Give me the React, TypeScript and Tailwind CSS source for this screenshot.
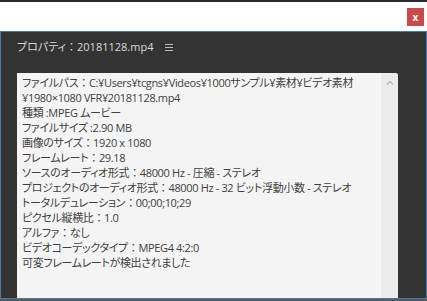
const lines = [
  "ファイルパス：C:¥Users¥tcgns¥Videos¥1000サンプル¥素材¥ビデオ素材",
  "¥1980×1080 VFR¥20181128.mp4",
  "種類 :MPEG ムービー",
  "ファイルサイズ :2.90 MB",
  "画像のサイズ：1920 x 1080",
  "フレームレート：29.18",
  "ソースのオーディオ形式：48000 Hz - 圧縮 - ステレオ",
  "プロジェクトのオーディオ形式：48000 Hz - 32 ビット浮動小数 - ステレオ",
  "トータルデュレーション：00;00;10;29",
  "ピクセル縦横比：1.0",
  "アルファ：なし",
  "ビデオコーデックタイプ：MPEG4 4:2:0",
  "可変フレームレートが検出されました",
];

// full-width colon keeps its full width, the rest is proportional
const Line = ({ text }: { text: string }) => {
  const parts = text.split("：");
  return (
    <div className="whitespace-nowrap">
      {parts.map((p, i) => (
        <span key={i}>
          {i > 0 && <span className="[font-feature-settings:normal]">：</span>}
          {p}
        </span>
      ))}
    </div>
  );
};

const App = () => {
  return (
    <div className="w-[427px] h-[301px] flex flex-col bg-white overflow-hidden font-['Open_Sans','Noto_Sans_CJK_JP',sans-serif] [font-feature-settings:'palt']">
      <div className="h-[31px] shrink-0 border-t-2 border-[#2a2a2a] flex justify-end items-start pt-[6px] pr-[3px]">
        <button type="button" className="w-[17px] h-[18px] bg-[#c84a4a] text-white text-[10px] font-bold leading-[16px] flex items-center justify-center">
          x
        </button>
      </div>
      <div className="h-[268px] shrink-0 flex flex-col bg-[#333333] border border-[#4a7ba6]">
        <div className="flex items-center gap-[12px] pl-[16px] pt-[7px] h-[23px] text-[11px] leading-[16px] text-[#d9d9d9]">
          <Line text="プロパティ：20181128.mp4" />
          <div className="flex flex-col gap-[2px] mt-[1px]">
            <span className="w-[8px] h-px bg-[#bdbdbd]" />
            <span className="w-[8px] h-px bg-[#bdbdbd]" />
            <span className="w-[8px] h-px bg-[#bdbdbd]" />
          </div>
        </div>
        <div className="flex-1 flex ml-[16px] mr-[28px] mt-[18px] bg-[#f4f4f4] rounded-tr-[3px] overflow-hidden">
          <div className="flex-1 pl-[5px] pt-[2px] text-[11px] leading-[15px] text-[#404040] tracking-[-0.35px]">
            {lines.map((line, i) => (
              <Line key={i} text={line} />
            ))}
          </div>
          <div className="w-[18px] bg-[#ebebeb] border-l border-[#fafafa] flex justify-center pt-[7px]">
            <svg width="8" height="5" viewBox="0 0 8 5" fill="none" stroke="#b8b8b8" strokeWidth="1.3">
              <path d="M1 4.5L4 1.5L7 4.5" />
            </svg>
          </div>
        </div>
      </div>
      <div className="flex-1 bg-[#5a5a5a]" />
    </div>
  );
};

export default App;
